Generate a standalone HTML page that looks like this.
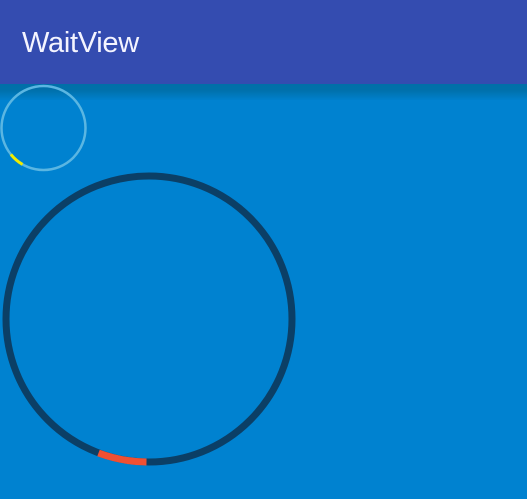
<!DOCTYPE html>
<html><head><style>
html,body{margin:0;padding:0;width:527px;height:499px;overflow:hidden;background:#0082d0;}
.hdr{position:absolute;left:0;top:0;width:527px;height:84px;background:#344cb0;}
.hdr span{position:absolute;left:22px;top:27px;font-family:"Liberation Sans",sans-serif;font-size:29px;font-weight:300;color:#f4f4ff;letter-spacing:-0.3px;}
.sh{position:absolute;left:0;top:84px;width:527px;height:16px;background:linear-gradient(#006fa8 0,#0070aa 6px,#0080cc 16px);}
svg{position:absolute;left:0;top:0;}
</style></head><body>
<div class="hdr"><span>WaitView</span></div>
<div class="sh"></div>
<svg width="527" height="499">
<circle cx="43.5" cy="128" r="42" fill="none" stroke="#5ab6e2" stroke-width="2.5"/>
<path d="M10.9 154.4 A42 42 0 0 0 22.5 164.4" fill="none" stroke="#f0ec00" stroke-width="3"/>
<circle cx="149" cy="319" r="143" fill="none" stroke="#0b3f66" stroke-width="7"/>
<path d="M98.5 453 A143 143 0 0 0 146.5 462" fill="none" stroke="#f05032" stroke-width="7"/>
</svg>
</body></html>
